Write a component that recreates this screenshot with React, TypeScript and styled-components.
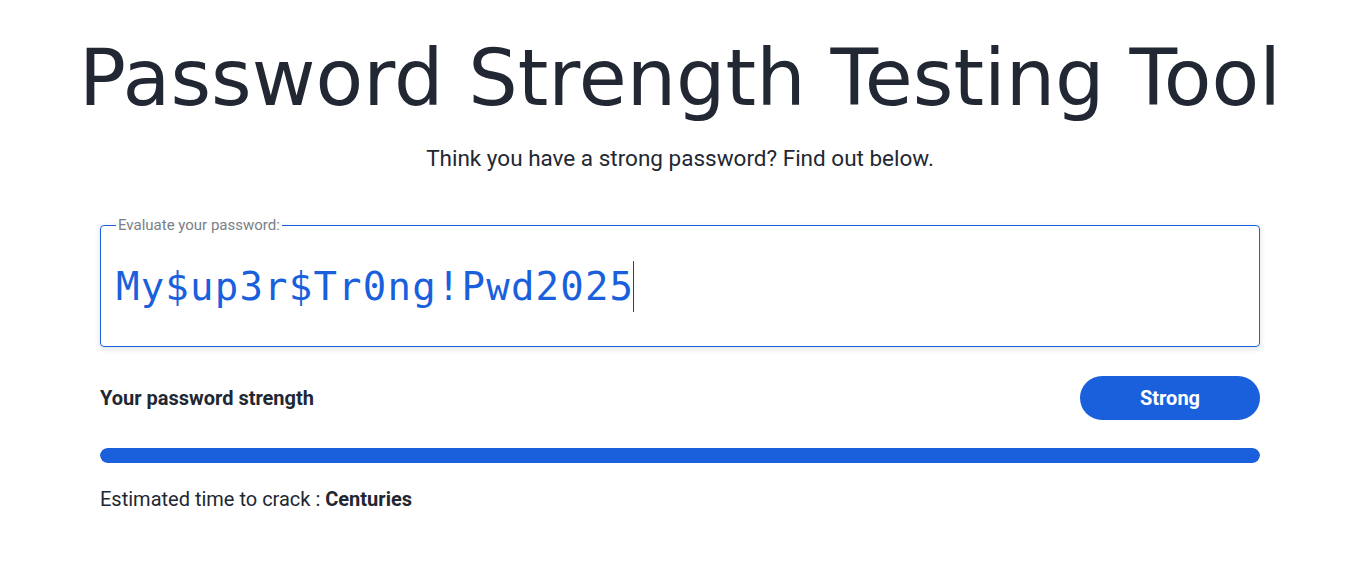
import React from "react";
import styled, { createGlobalStyle } from "styled-components";

const Global = createGlobalStyle`
  html, body { margin: 0; padding: 0; background: #fff; }
  body { font-family: Roboto, "Liberation Sans", sans-serif; color: #222833; }
`;

const Page = styled.main`
  padding: 0 0 0 7px;
`;

const Container = styled.div`
  width: 1160px;
  margin: 0 auto;
  display: flex;
  flex-direction: column;
`;

const Title = styled.h1`
  margin: 28px -100px 0;
  text-align: center;
  white-space: nowrap;
  font-family: "DejaVu Sans", sans-serif;
  font-weight: 400;
  font-size: 78px;
  line-height: 100px;
  color: #222833;
`;

const Subtitle = styled.p`
  margin: 15px 0 0;
  text-align: center;
  font-size: 22.5px;
  line-height: 30px;
  color: #222833;
`;

const Field = styled.fieldset`
  margin: 44px 0 0;
  padding: 0 15px;
  border: 1px solid #1a5fdc;
  border-radius: 4px;
  box-shadow: 0 2px 6px rgba(0, 0, 0, 0.12);
`;

const Legend = styled.legend`
  padding: 0 2px;
  font-size: 15px;
  line-height: 16px;
  color: #7a7f88;
`;

const InputArea = styled.div`
  height: 113px;
  display: flex;
  align-items: center;
`;

const Value = styled.span`
  font-family: "DejaVu Sans Mono", "Liberation Mono", monospace;
  font-size: 39px;
  letter-spacing: 1.2px;
  color: #1a5fdc;
  margin-top: -6px;
`;

const Caret = styled.span`
  display: inline-block;
  width: 1px;
  height: 51px;
  background: #1a3f9c;
  margin-left: -1px;
  margin-top: -6px;
`;

const StrengthRow = styled.div`
  margin-top: 29px;
  display: flex;
  align-items: center;
  justify-content: space-between;
`;

const Label = styled.span`
  font-size: 20px;
  font-weight: 700;
  color: #222833;
`;

const Pill = styled.span`
  width: 180px;
  height: 44px;
  border-radius: 22px;
  background: #1a5fdc;
  color: #fff;
  font-size: 20px;
  font-weight: 700;
  display: flex;
  align-items: center;
  justify-content: center;
`;

const Track = styled.div`
  margin-top: 28px;
  height: 15px;
  border-radius: 8px;
  background: #e6ecf8;
  overflow: hidden;
`;

const Fill = styled.div`
  height: 100%;
  background: #1a5fdc;
  border-radius: 8px;
`;

const Estimate = styled.p`
  margin: 23px 0 0;
  font-size: 20px;
  line-height: 26px;
  color: #222833;
  b { font-weight: 700; }
`;

export default function App() {
  const pct = 100;
  return (
    <Page>
      <Global />
      <Container>
        <Title>Password Strength Testing Tool</Title>
        <Subtitle>Think you have a strong password? Find out below.</Subtitle>
        <Field>
          <Legend>Evaluate your password:</Legend>
          <InputArea>
            <Value>My$up3r$Tr0ng!Pwd2025</Value>
            <Caret />
          </InputArea>
        </Field>
        <StrengthRow>
          <Label>Your password strength</Label>
          <Pill>Strong</Pill>
        </StrengthRow>
        <Track>
          <Fill style={{ width: `${pct}%` }} />
        </Track>
        <Estimate>
          Estimated time to crack : <b>Centuries</b>
        </Estimate>
      </Container>
    </Page>
  );
}
